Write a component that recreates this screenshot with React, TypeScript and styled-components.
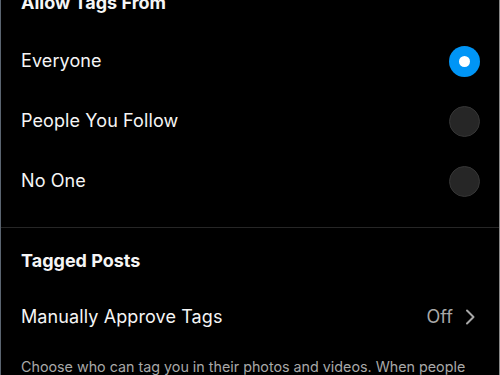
import React from "react";
import styled, { createGlobalStyle } from "styled-components";

const Global = createGlobalStyle`
  html, body { margin: 0; padding: 0; background: #000; }
  body { font-family: Inter, "Noto Sans", "Liberation Sans", sans-serif; overflow: hidden; }
`;

const Screen = styled.div`
  width: 500px;
  height: 375px;
  box-sizing: border-box;
  background: #000;
  border-left: 1px solid #5a6470;
  border-right: 1px solid #8a8a8a;
  overflow: hidden;
  color: #f5f5f5;
`;

const Section = styled.section`
  display: flex;
  flex-direction: column;
  padding: 0 19px 0 20px;
`;

const Heading = styled.h2<{ $offset?: number }>`
  margin: ${(p) => p.$offset ?? 0}px 0 0 0;
  font-size: 18px;
  line-height: 22px;
  font-weight: 700;
  color: #f5f5f5;
  letter-spacing: 0;
`;

const Options = styled.div`
  display: flex;
  flex-direction: column;
  margin-top: 17px;
`;

const Row = styled.div<{ $gap?: number }>`
  height: 60px;
  margin-top: ${(p) => p.$gap ?? 0}px;
  display: flex;
  align-items: center;
  justify-content: space-between;
`;

const Label = styled.span`
  font-size: 18px;
  line-height: 22px;
  color: #f5f5f5;
  letter-spacing: 0.1px;
`;

const Radio = styled.span<{ $on?: boolean }>`
  width: 31px;
  height: 31px;
  box-sizing: border-box;
  border-radius: 50%;
  display: flex;
  align-items: center;
  justify-content: center;
  background: ${(p) => (p.$on ? "#0095f6" : "#262626")};
  border: ${(p) => (p.$on ? "none" : "1.5px solid #363636")};
  &::after {
    content: "";
    display: ${(p) => (p.$on ? "block" : "none")};
    width: 11px;
    height: 11px;
    border-radius: 50%;
    background: #fff;
  }
`;

const Divider = styled.hr`
  margin: 16px 0 0 0;
  border: none;
  height: 1px;
  background: #262626;
`;

const Value = styled.span`
  display: flex;
  align-items: center;
  gap: 12px;
  font-size: 18px;
  line-height: 22px;
  color: #a8a8a8;
  margin-right: 5px;
`;

const Description = styled.p`
  margin: 10px 0 0 0;
  font-size: 14.3px;
  line-height: 20px;
  color: #a8a8a8;
  white-space: nowrap;
`;

const Chevron = () => (
  <svg width="10" height="16" viewBox="0 0 10 16" fill="none">
    <path d="M2 1.5 L8.5 8 L2 14.5" stroke="#a8a8a8" strokeWidth="2" strokeLinecap="round" strokeLinejoin="round" />
  </svg>
);

const options = [
  { label: "Everyone", on: true },
  { label: "People You Follow", on: false },
  { label: "No One", on: false },
];

export default function App() {
  return (
    <>
      <Global />
      <Screen>
        <Section>
          <Heading $offset={-8}>Allow Tags From</Heading>
          <Options>
            {options.map((o) => (
              <Row key={o.label}>
                <Label>{o.label}</Label>
                <Radio $on={o.on} />
              </Row>
            ))}
          </Options>
        </Section>
        <Divider />
        <Section>
          <Heading $offset={22}>Tagged Posts</Heading>
          <Row $gap={15}>
            <Label>Manually Approve Tags</Label>
            <Value>
              Off
              <Chevron />
            </Value>
          </Row>
          <Description>
            Choose who can tag you in their photos and videos. When people
          </Description>
        </Section>
      </Screen>
    </>
  );
}
